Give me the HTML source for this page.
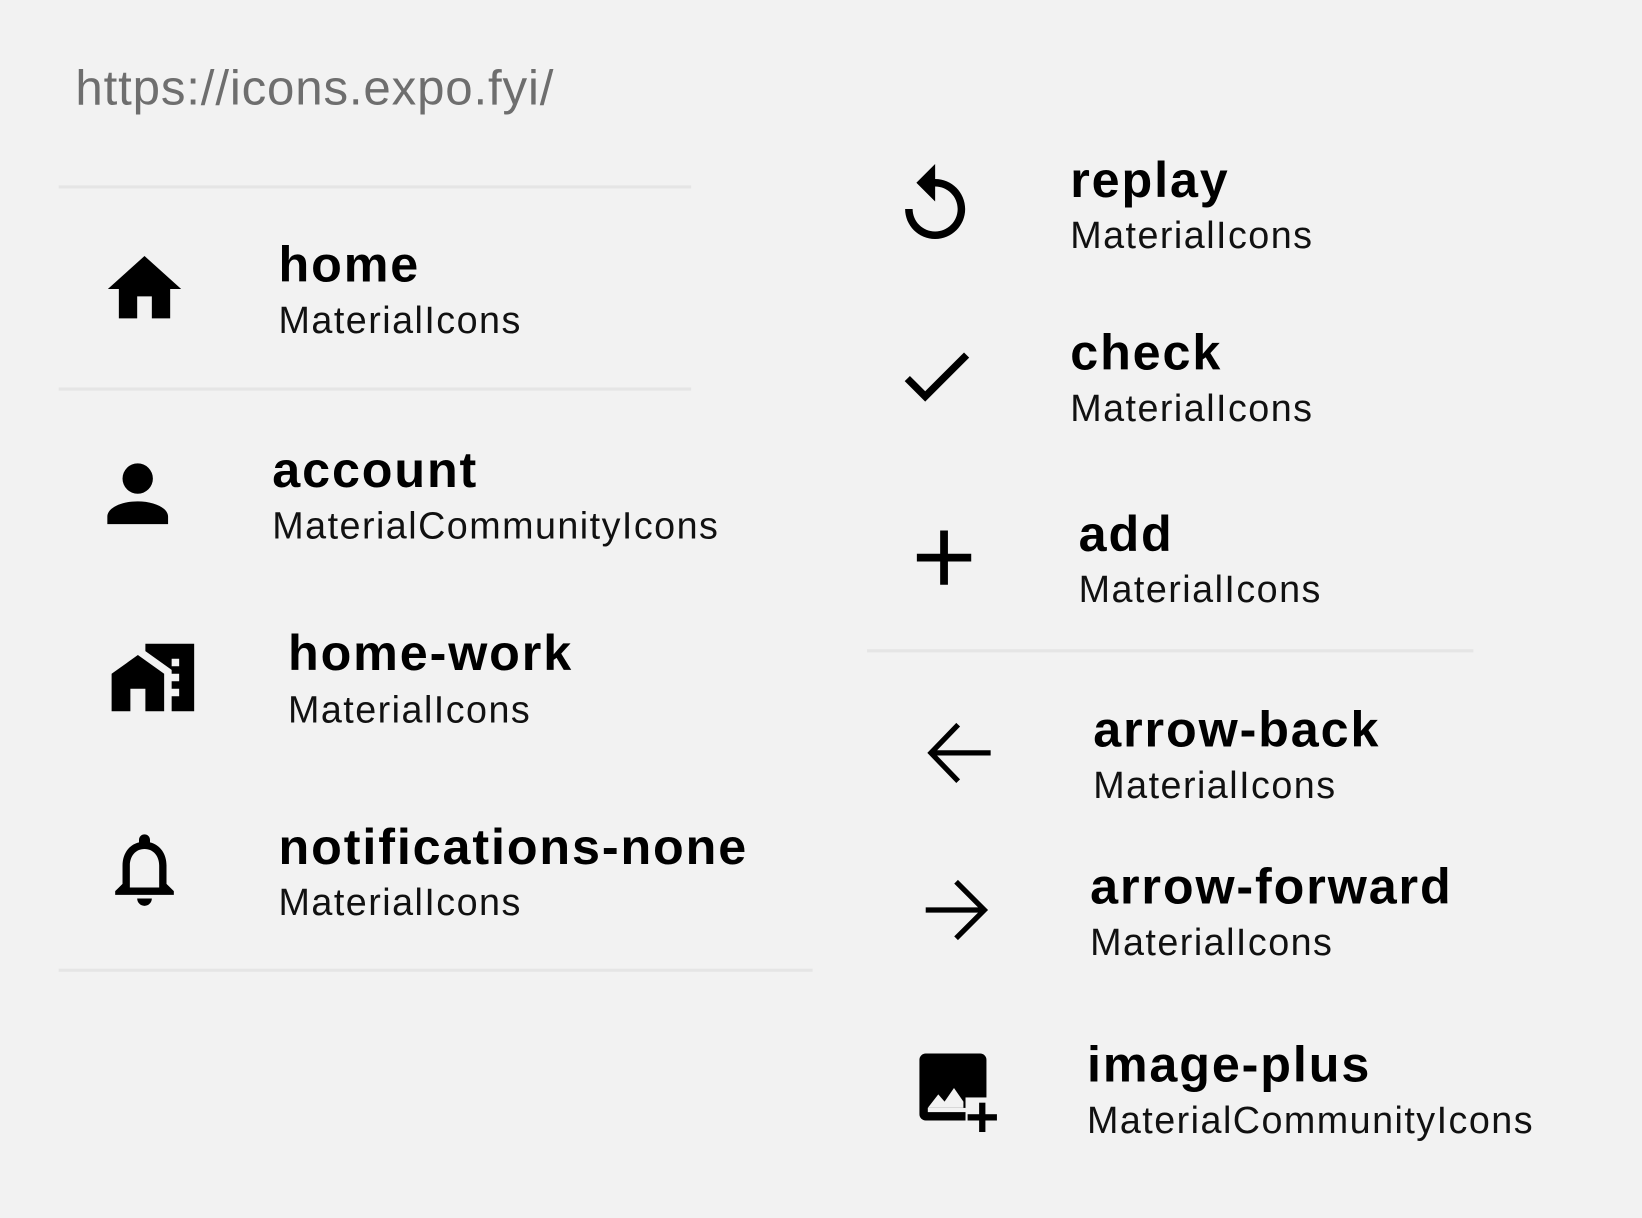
<!DOCTYPE html>
<html><head><meta charset="utf-8"><style>
html,body{margin:0;padding:0;background:#f2f2f2;overflow:hidden;width:1642px;height:1218px}
#c{position:absolute;left:0;top:0;width:1568px;height:1163px;transform:scale(1.04719);transform-origin:0 0;font-family:"Liberation Sans",sans-serif;color:#000}
.t{position:absolute;font-weight:bold;font-size:48px;line-height:1;white-space:nowrap;letter-spacing:1.8px}
.s{position:absolute;font-size:36px;line-height:1;white-space:nowrap;letter-spacing:1.4px;color:#111}
.l{position:absolute;height:3px;background:#e5e5e5}
svg{position:absolute}
</style></head><body><div id="c">
<div style="position:absolute;left:72px;top:60px;font-size:47px;line-height:1;color:#6e6e6e;white-space:nowrap;letter-spacing:0.8px">https://icons.expo.fyi/</div>

<div class="l" style="left:56px;top:177px;width:604px"></div>
<div class="l" style="left:56px;top:370px;width:604px"></div>
<div class="l" style="left:56px;top:925px;width:720px"></div>
<div class="l" style="left:828px;top:620px;width:579px"></div>

<svg style="left:96px;top:234px" width="84" height="84" viewBox="0 0 24 24"><path d="M10 20v-6h4v6h5v-8h3L12 3 2 12h3v8z"/></svg>
<div class="t" style="left:266px;top:230px">home</div>
<div class="s" style="left:266px;top:288px">MaterialIcons</div>

<svg style="left:88px;top:428px" width="87" height="87" viewBox="0 0 24 24"><path d="M12,4A4,4 0 0,1 16,8A4,4 0 0,1 12,12A4,4 0 0,1 8,8A4,4 0 0,1 12,4M12,14C16.42,14 20,15.79 20,18V20H4V18C4,15.79 7.58,14 12,14Z"/></svg>
<div class="t" style="left:260px;top:426px">account</div>
<div class="s" style="left:260px;top:484px">MaterialCommunityIcons</div>

<svg style="left:103px;top:604px" width="86" height="86" viewBox="0 0 24 24"><path d="M1 11v10h5v-6h4v6h5V11L8 6z M10 3v1.97l7 5V11h2v2h-2v2h2v2h-2v4h6V3H10zm9 6h-2V7h2v2z"/></svg>
<div class="t" style="left:275px;top:601px">home-work</div>
<div class="s" style="left:275px;top:660px">MaterialIcons</div>

<svg style="left:96px;top:788px" width="84" height="84" viewBox="0 0 24 24"><path fill-rule="evenodd" d="M12 22c1.1 0 2-.9 2-2h-4c0 1.1.89 2 2 2zm6-6v-5c0-3.070-1.64-5.64-4.5-6.32V4c0-.83-.67-1.5-1.5-1.5s-1.5.67-1.5 1.5v.68C7.63 5.36 6 7.92 6 11v5l-2 2v1h16v-1l-2-2zm-2 1H8v-6c0-2.48 1.51-4.5 4-4.5s4 2.02 4 4.5v6z"/></svg>
<div class="t" style="left:266px;top:786px">notifications-none</div>
<div class="s" style="left:266px;top:844px">MaterialIcons</div>

<svg style="left:850px;top:153px" width="86" height="86" viewBox="0 0 24 24"><path d="M12 5V1L7 6l5 5V7c3.31 0 6 2.69 6 6s-2.69 6-6 6-6-2.69-6-6H4c0 4.42 3.58 8 8 8s8-3.58 8-8-3.58-8-8-8z"/></svg>
<div class="t" style="left:1022px;top:149px">replay</div>
<div class="s" style="left:1022px;top:207px">MaterialIcons</div>

<svg style="left:852px;top:317px" width="84" height="84" viewBox="0 0 24 24"><path d="M9 16.17L4.83 12l-1.42 1.41L9 19 21 7l-1.41-1.41z"/></svg>
<div class="t" style="left:1022px;top:314px">check</div>
<div class="s" style="left:1022px;top:372px">MaterialIcons</div>

<svg style="left:857px;top:488px" width="89" height="89" viewBox="0 0 24 24"><path d="M19 13h-6v6h-2v-6H5v-2h6V5h2v6h6v2z"/></svg>
<div class="t" style="left:1030px;top:487px">add</div>
<div class="s" style="left:1030px;top:545px">MaterialIcons</div>

<svg style="left:0;top:0" width="1568" height="1163">
<g fill="none" stroke="#000" stroke-width="5">
<path d="M889 719H946M915 692L889 719L915 746"/>
<path d="M884 869H940M913 842L940 869L913 896"/>
</g>
<rect x="878" y="1006" width="64" height="64" rx="6" fill="#000"/>
<rect x="922" y="1048" width="36" height="36" fill="#f2f2f2"/>
<path d="M886 1058L896 1045L902 1052L911 1039L920 1052L920 1058Z" fill="#f2f2f2"/>
<rect x="886" y="1058" width="36" height="4" fill="#f2f2f2"/>
<rect x="935" y="1053" width="6" height="28" fill="#000"/>
<rect x="924" y="1064" width="28" height="6" fill="#000"/>
</svg>
<div class="t" style="left:1044px;top:674px">arrow-back</div>
<div class="s" style="left:1044px;top:732px">MaterialIcons</div>

<div class="t" style="left:1041px;top:824px">arrow-forward</div>
<div class="s" style="left:1041px;top:882px">MaterialIcons</div>

<div class="t" style="left:1038px;top:994px">image-plus</div>
<div class="s" style="left:1038px;top:1052px">MaterialCommunityIcons</div>
</div></body></html>
